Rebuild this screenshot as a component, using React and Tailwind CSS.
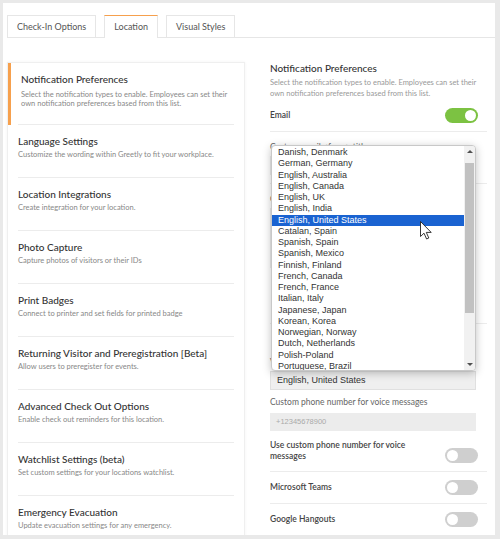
import React from 'react';

const sections = [
  { title: 'Notification Preferences', desc: 'Select the notification types to enable. Employees can set their own notification preferences based from this list.', active: true },
  { title: 'Language Settings', desc: 'Customize the wording within Greetly to fit your workplace.' },
  { title: 'Location Integrations', desc: 'Create integration for your location.' },
  { title: 'Photo Capture', desc: 'Capture photos of visitors or their IDs' },
  { title: 'Print Badges', desc: 'Connect to printer and set fields for printed badge' },
  { title: 'Returning Visitor and Preregistration [Beta]', desc: 'Allow users to preregister for events.' },
  { title: 'Advanced Check Out Options', desc: 'Enable check out reminders for this location.' },
  { title: 'Watchlist Settings (beta)', desc: 'Set custom settings for your locations watchlist.' },
  { title: 'Emergency Evacuation', desc: 'Update evacuation settings for any emergency.' },
];

const languages = [
  'Danish, Denmark',
  'German, Germany',
  'English, Australia',
  'English, Canada',
  'English, UK',
  'English, India',
  'English, United States',
  'Catalan, Spain',
  'Spanish, Spain',
  'Spanish, Mexico',
  'Finnish, Finland',
  'French, Canada',
  'French, France',
  'Italian, Italy',
  'Japanese, Japan',
  'Korean, Korea',
  'Norwegian, Norway',
  'Dutch, Netherlands',
  'Polish-Poland',
  'Portuguese, Brazil',
];

const Toggle = ({ on, low }) => (
  <div className={`w-[33px] h-[15px] rounded-full flex items-center px-[2px] ${low ? 'mt-[8px]' : ''} ${on ? 'bg-[#7cc242] justify-end' : 'bg-[#cfcfcf] justify-start'}`}>
    <div className="w-[11px] h-[11px] rounded-full bg-white" />
  </div>
);

const ToggleRow = ({ label, on, twoLine }) => (
  <div className={`flex items-center justify-between border-b border-[#ececec] pr-[9px] ${twoLine ? 'h-[41px]' : 'h-[32px]'}`}>
    <span className="text-[8.5px] font-semibold text-[#444] leading-[11px] w-[150px]">{label}</span>
    <Toggle on={on} low={twoLine} />
  </div>
);

const App = () => {
  return (
    <div className="w-[500px] h-[539px] bg-[#e9e9e9] pt-[3px] pl-[3px] pr-[5px] pb-[4px] font-['Lato',sans-serif]">
      <div className="w-full h-full bg-white overflow-hidden pl-[4px] pt-[12px]">
        {/* Tabs */}
        <div className="flex items-start gap-[8px] border-b border-[#e6e6e6] h-[23px]">
          <div className="h-[22px] px-[9px] flex items-center border border-b-0 border-[#e6e6e6] text-[9px] text-[#555] bg-white">Check-In Options</div>
          <div className="h-[23px] px-[9px] flex items-center border border-b-0 border-[#e6e6e6] border-t-[#f6a04d] text-[9px] text-[#555] bg-white relative z-10">Location</div>
          <div className="h-[22px] px-[9px] flex items-center border border-b-0 border-[#e6e6e6] text-[9px] text-[#555] bg-white">Visual Styles</div>
        </div>

        <div className="flex mt-[24px]">
          {/* Left list */}
          <div className="w-[238px] shrink-0 border border-[#efefef] shadow-[0_0_3px_rgba(0,0,0,0.05)]">
            {sections.map((s) =>
              s.active ? (
                <div key={s.title} className="border-l-[3px] border-[#f6a04d] pl-[10px] pr-[10px]">
                  <div className="border-b border-[#ececec] pt-[10px] pb-[15px] -ml-[3px] pl-[3px]">
                    <div className="text-[10px] leading-[12px] text-[#333] font-medium">{s.title}</div>
                    <div className="text-[7.5px] leading-[9.5px] text-[#888] mt-[4.5px]">{s.desc}</div>
                  </div>
                </div>
              ) : (
                <div key={s.title} className="px-[10px]">
                  <div className="border-b border-[#ececec] pt-[10px] pb-[17px]">
                    <div className="text-[10px] leading-[12px] text-[#333] font-medium">{s.title}</div>
                    <div className="text-[7.5px] leading-[10px] text-[#888] mt-[3px]">{s.desc}</div>
                  </div>
                </div>
              )
            )}
          </div>

          {/* Right panel */}
          <div className="relative flex-1 pl-[25px] pr-[8px]">
            <div className="text-[10px] leading-[12px] text-[#333] font-medium">Notification Preferences</div>
            <div className="text-[7.5px] leading-[11px] text-[#999] mt-[2.5px]">
              Select the notification types to enable. Employees can set their own notification preferences based from this list.
            </div>
            <div className="mt-[1.5px]">
              <ToggleRow label="Email" on />
            </div>

            {/* area covered by the open dropdown */}
            <div className="pt-[9px] pb-[8px] border-b border-[#ececec]">
              <div className="text-[8.5px] leading-[12px] text-[#666]">Custom email &lt;from&gt; title</div>
              <div className="w-[206px] h-[19px] mt-[3px] bg-[#ececec]" />
            </div>
            <div className="h-[140px] border-b border-[#ececec] pt-[9px]">
              <div className="text-[8.5px] leading-[12px] text-[#666]">Custom SMS message</div>
              <div className="w-[206px] h-[60px] mt-[3px] bg-[#ececec]" />
            </div>
            <div className="pt-[32px]">
              <div className="text-[8.5px] leading-[12px] text-[#666]">Voice message language</div>
              <div className="w-[206px] h-[19px] mt-[3px] bg-[#efefef] border border-[#e0e0e0] flex items-center pl-[6px] text-[9px] text-[#333] font-['Liberation_Sans',sans-serif]">
                English, United States
              </div>
            </div>

            <div className="text-[8.5px] leading-[12px] text-[#666] mt-[6px]">Custom phone number for voice messages</div>
            <div className="w-[206px] h-[18px] mt-[5px] bg-[#ececec] flex items-center pl-[6px] text-[7.5px] text-[#aaa] font-['Liberation_Sans',sans-serif]">
              +12345678900
            </div>
            <ToggleRow label="Use custom phone number for voice messages" twoLine />
            <ToggleRow label="Microsoft Teams" />
            <ToggleRow label="Google Hangouts" />

            {/* Open select list */}
            <div className="absolute left-[26px] top-[83px] w-[205px] h-[226px] bg-white border border-[#c8c8c8] rounded-[4px] shadow-[0_2px_8px_rgba(0,0,0,0.25)] overflow-hidden flex font-['Liberation_Sans',sans-serif]">
              <div className="flex-1 pt-[1px]">
                {languages.map((l) => (
                  <div
                    key={l}
                    className={`h-[11.25px] leading-[11.25px] text-[9px] pl-[6px] whitespace-nowrap ${l === 'English, United States' ? 'bg-[#1a63d1] text-white' : 'text-[#333]'}`}
                  >
                    {l}
                  </div>
                ))}
              </div>
              <div className="w-[11px] bg-[#f1f1f1] flex flex-col items-center">
                <div className="h-[17px] flex items-start pt-[4px]">
                  <div className="w-0 h-0 border-l-[3px] border-r-[3px] border-b-[3px] border-l-transparent border-r-transparent border-b-[#505050]" />
                </div>
                <div className="w-[9px] h-[150px] bg-[#c1c1c1]" />
                <div className="flex-1" />
                <div className="h-[10px] flex items-start pt-[3px]">
                  <div className="w-0 h-0 border-l-[3px] border-r-[3px] border-t-[3px] border-l-transparent border-r-transparent border-t-[#505050]" />
                </div>
              </div>
            </div>

            {/* mouse pointer */}
            <svg className="absolute left-[175px] top-[159px]" width="13" height="19" viewBox="0 0 13 19">
              <path d="M0.5 0.5 L0.5 15.5 L4 12.2 L6.6 18 L8.8 17 L6.3 11.4 L11.2 11.4 Z" fill="white" stroke="#222" strokeWidth="0.9" strokeLinejoin="round" />
            </svg>
          </div>
        </div>
      </div>
    </div>
  );
};

export default App;
